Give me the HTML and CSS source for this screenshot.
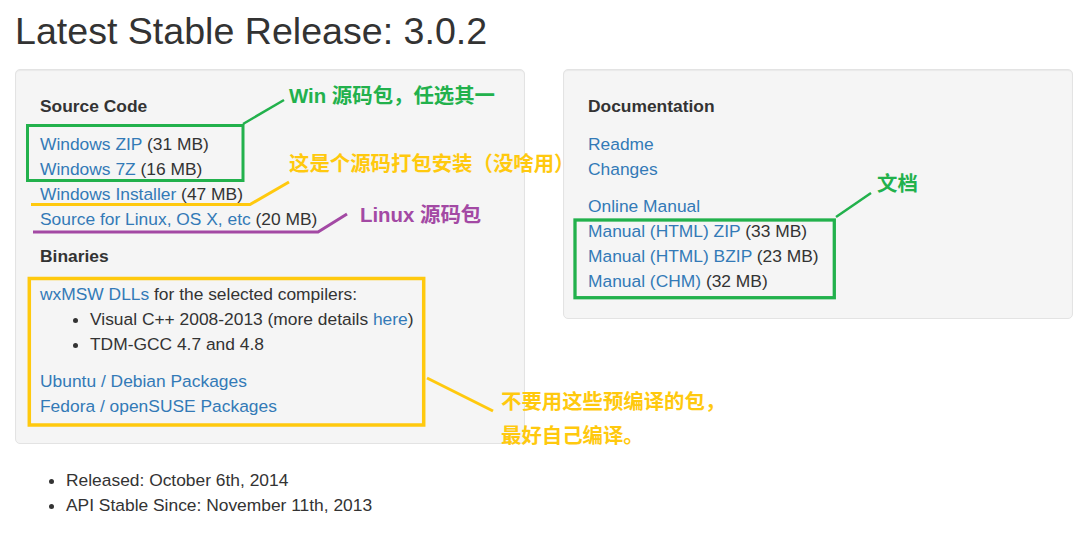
FILE: index.html
```html
<!DOCTYPE html>
<html lang="en">
<head>
<meta charset="utf-8">
<title>Latest Stable Release: 3.0.2</title>
<link rel="stylesheet" href="styles.css">
</head>
<body>
<div class="page">
  <h2 class="title">Latest Stable Release: 3.0.2</h2>
  <div class="panels">
    <div class="well">
      <h4 class="well-title">Source Code</h4>
      <div class="group">
        <div><a href="#">Windows ZIP</a> (31 MB)</div>
        <div><a href="#">Windows 7Z</a> (16 MB)</div>
        <div><a href="#">Windows Installer</a> (47 MB)</div>
        <div><a href="#">Source for Linux, OS X, etc</a> (20 MB)</div>
      </div>
      <h4 class="well-title">Binaries</h4>
      <div class="group">
        <div><a href="#">wxMSW DLLs</a> for the selected compilers:</div>
        <ul class="sub-list">
          <li>Visual C++ 2008-2013 (more details <a href="#">here</a>)</li>
          <li>TDM-GCC 4.7 and 4.8</li>
        </ul>
      </div>
      <div class="group last">
        <div><a href="#">Ubuntu / Debian Packages</a></div>
        <div><a href="#">Fedora / openSUSE Packages</a></div>
      </div>
    </div>
    <div class="well">
      <h4 class="well-title">Documentation</h4>
      <div class="group">
        <div><a href="#">Readme</a></div>
        <div><a href="#">Changes</a></div>
      </div>
      <div class="group last">
        <div><a href="#">Online Manual</a></div>
        <div><a href="#">Manual (HTML) ZIP</a> (33 MB)</div>
        <div><a href="#">Manual (HTML) BZIP</a> (23 MB)</div>
        <div><a href="#">Manual (CHM)</a> (32 MB)</div>
      </div>
    </div>
  </div>
  <ul class="facts">
    <li>Released: October 6th, 2014</li>
    <li>API Stable Since: November 11th, 2013</li>
  </ul>
</div>

<svg class="marks" width="1090" height="534" viewBox="0 0 1090 534" aria-hidden="true">
  <g fill="none" stroke-linecap="butt">
    <rect x="27.5" y="125.5" width="215.5" height="55" stroke="#22b14c" stroke-width="3"/>
    <line x1="243" y1="124" x2="284" y2="100" stroke="#22b14c" stroke-width="2.5"/>
    <polyline points="31,204.5 250,204.5 289,182" stroke="#ffc90e" stroke-width="3"/>
    <polyline points="33,232 318,232 347,214" stroke="#a349a4" stroke-width="3"/>
    <rect x="29.3" y="278.5" width="394.4" height="146.5" stroke="#ffc90e" stroke-width="3.5"/>
    <line x1="427" y1="378" x2="493" y2="411" stroke="#ffc90e" stroke-width="3"/>
    <rect x="575" y="220" width="259.3" height="77.7" stroke="#22b14c" stroke-width="3.3"/>
    <line x1="836" y1="217" x2="871" y2="193" stroke="#22b14c" stroke-width="2.5"/>
  </g>
</svg>

<div class="note note-green note-win">Win 源码包，任选其一</div>
<div class="note note-yellow note-installer">这是个源码打包安装（没啥用）</div>
<div class="note note-purple note-linux">Linux 源码包</div>
<div class="note note-green note-docs">文档</div>
<div class="note note-yellow note-bin">不要用这些预编译的包，<br>最好自己编译。</div>
</body>
</html>
```

FILE: styles.css
```css
html, body {
  margin: 0;
  padding: 0;
  background: #ffffff;
}

body {
  font-family: "Liberation Sans", Arial, sans-serif;
  font-size: 17.4px;
  line-height: 25px;
  color: #333333;
  width: 1090px;
  height: 534px;
  overflow: hidden;
  position: relative;
}

a {
  color: #337ab7;
  text-decoration: none;
}

.page {
  padding: 0 15px;
}

.title {
  font-size: 37.6px;
  font-weight: normal;
  line-height: 41px;
  margin: 11px 0 17px 0;
  color: #333333;
}

.panels {
  display: flex;
  gap: 38px;
  align-items: flex-start;
}

.well {
  box-sizing: border-box;
  width: 510px;
  padding: 24px;
  background: #f5f5f5;
  border: 1px solid #e3e3e3;
  border-radius: 5px;
  box-shadow: inset 0 1px 1px rgba(0, 0, 0, 0.05);
}

.well-title {
  font-size: 17.4px;
  line-height: 25px;
  font-weight: bold;
  margin: 0 0 12.5px 0;
  color: #333333;
}

.group {
  margin: 0 0 12.5px 0;
}

.group.last {
  margin-bottom: 0;
}

.sub-list {
  margin: 0;
  padding-left: 50px;
}

.facts {
  margin: 24px 0 0 0;
  padding-left: 51px;
}

.marks {
  position: absolute;
  left: 0;
  top: 0;
  pointer-events: none;
}

.note {
  position: absolute;
  font-family: "Liberation Sans", "Noto Sans CJK SC", sans-serif;
  font-weight: bold;
  font-size: 20.4px;
  line-height: 34px;
  white-space: nowrap;
}

.note-green { color: #22b14c; }
.note-yellow { color: #ffc90e; }
.note-purple { color: #a349a4; }

.note-win { left: 289px; top: 79px; }
.note-installer { left: 289px; top: 147px; }
.note-linux { left: 360px; top: 198px; }
.note-docs { left: 877px; top: 167px; }
.note-bin { left: 501px; top: 385px; }
```
